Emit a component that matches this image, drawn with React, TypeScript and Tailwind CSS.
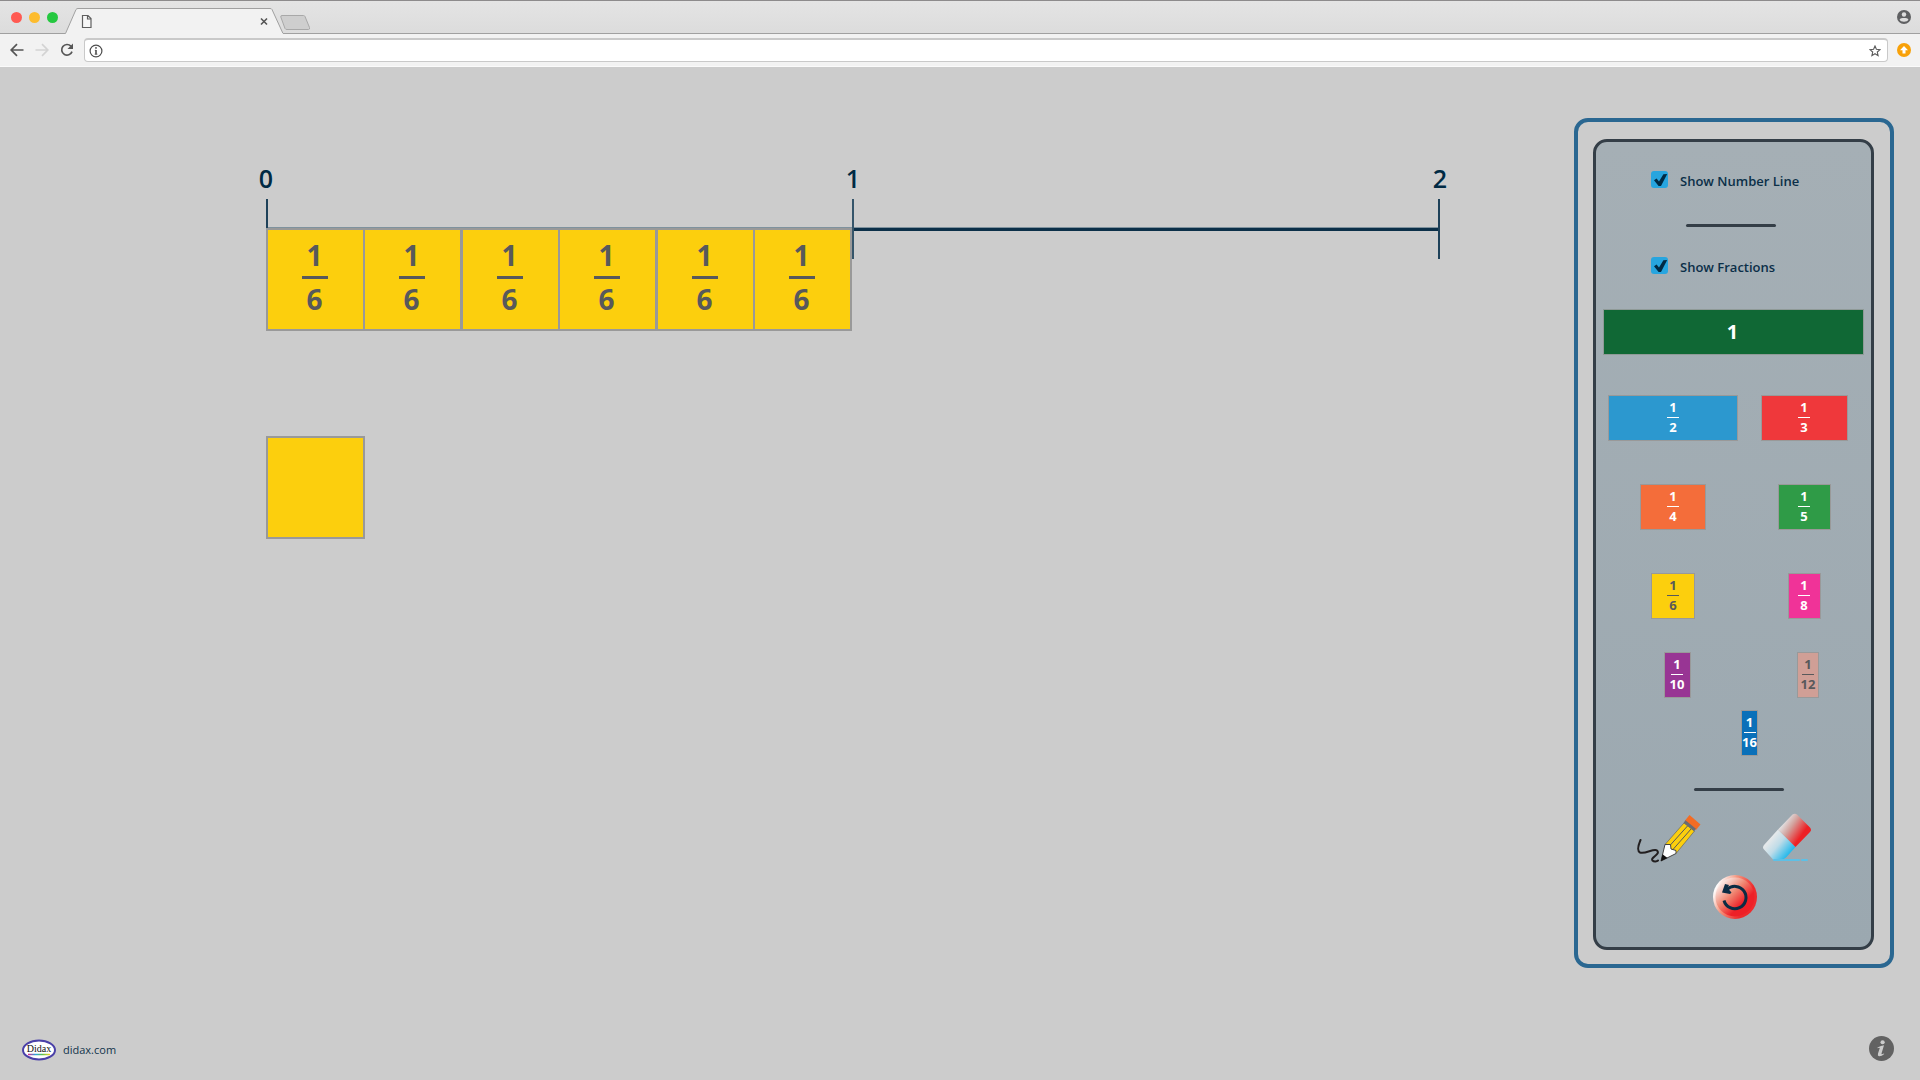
import React, { useState } from "react";

type MiniTile = {
  denominator: number;
  size: string;
  color: string;
};

const tileRows: { className: string; tiles: MiniTile[] }[] = [
  {
    className: "mt-10",
    tiles: [
      { denominator: 2, size: "w-[130px]", color: "bg-[#2c98cf] text-white" },
      { denominator: 3, size: "w-[87px]", color: "bg-[#ef383b] text-white" },
    ],
  },
  {
    className: "mt-[43px]",
    tiles: [
      { denominator: 4, size: "w-[66px]", color: "bg-[#f46d3a] text-white" },
      { denominator: 5, size: "w-[53px]", color: "bg-[#2f9b47] text-white" },
    ],
  },
  {
    className: "mt-[43px]",
    tiles: [
      { denominator: 6, size: "w-11", color: "bg-[#fccf0d] text-[#58595b]" },
      { denominator: 8, size: "w-[33px]", color: "bg-[#f03398] text-white" },
    ],
  },
  {
    className: "mt-[33px] pl-1",
    tiles: [
      { denominator: 10, size: "w-[27px]", color: "bg-[#983594] text-white" },
      { denominator: 12, size: "w-[22px]", color: "bg-[#d09f96] text-[#58595b]" },
    ],
  },
];

function PaletteTile({ denominator, size, color }: MiniTile) {
  return (
    <button
      type="button"
      aria-label={`Add 1/${denominator} tile`}
      className={`flex h-[46px] flex-col items-center border border-[#999] pt-[3px] text-[13px] leading-4 font-bold ${size} ${color}`}
    >
      <span>1</span>
      <span className="mt-0.5 h-px w-3 shrink-0 bg-current" />
      <span className="mt-px">{denominator}</span>
    </button>
  );
}

function SixthTile({ showLabel, className = "" }: { showLabel: boolean; className?: string }) {
  return (
    <div
      className={`flex h-[103px] w-[99px] shrink-0 flex-col items-center border-2 border-[#999] bg-[#fccf0d] pt-[11px] pr-0.5 text-[28px] leading-7 font-bold text-[#58595b] ${className}`}
    >
      {showLabel && (
        <>
          <span>1</span>
          <span className="mt-[7px] h-[3px] w-[26px] bg-current" />
          <span className="mt-1.5">6</span>
        </>
      )}
    </div>
  );
}

function CheckOption({
  id,
  label,
  checked,
  onChange,
}: {
  id: string;
  label: string;
  checked: boolean;
  onChange: (value: boolean) => void;
}) {
  return (
    <div className="flex h-[18px] items-start pl-[55px]">
      <span className="grid size-[17px] shrink-0">
        <input
          id={id}
          type="checkbox"
          checked={checked}
          onChange={(event) => onChange(event.target.checked)}
          className="col-start-1 row-start-1 size-[17px] appearance-none rounded-[3px] bg-[#27a5df]"
        />
        {checked && (
          <svg viewBox="0 0 17 17" className="pointer-events-none col-start-1 row-start-1 size-[17px]" aria-hidden="true">
            <path d="M3 9.2 5.6 7.6 8 10.4 12.4 3.2 16.2 3 10 15H7.6Z" fill="#002a44" />
          </svg>
        )}
      </span>
      <label htmlFor={id} className="mt-px pl-3 text-[13px] leading-[18px] font-semibold whitespace-nowrap text-[#0b2f48]">
        {label}
      </label>
    </div>
  );
}

function BrowserBar() {
  return (
    <header className="border-t border-[#8d8b8c] bg-[#f2f2f2]">
      <div className="flex h-[33px] items-stretch bg-gradient-to-b from-[#e4e4e4] to-[#dcdcdc]">
        <div className="flex w-16 shrink-0 items-center gap-[7px] border-b border-[#a0a0a0] pl-[11px]">
          <span className="size-[11px] rounded-full bg-[#ff5a52]" />
          <span className="size-[11px] rounded-full bg-[#fdbc2e]" />
          <span className="size-[11px] rounded-full bg-[#25c840]" />
        </div>
        <svg width="250" height="33" viewBox="0 0 250 33" className="shrink-0" aria-hidden="true">
          <path d="M0 33V32.5H1.5L12 8.5Q12.600 7.500 14 7.500H206Q207.500 7.500 208 8.500L219 32.500H250V33Z" fill="#f2f2f2" />
          <path d="M0 32.500H1.500L12 8.500Q12.600 7.500 14 7.500H206Q207.500 7.500 208 8.500L219 32.500H250" fill="none" stroke="#a0a0a0" />
          <path d="M2 32.500H218.500" stroke="#f2f2f2" strokeWidth="1.200" />
          <path d="M18.500 14.500H24L27 17.500V26.500H18.500Z M23.500 14.500V18H27" fill="#f7f7f7" stroke="#5f5f5f" strokeWidth="1.200" />
          <path d="M197 17.500 203 23.500M203 17.500 197 23.500" stroke="#555" strokeWidth="1.600" />
          <path d="M218 14.500H239.500Q240.500 14.500 241 15.500L245.500 26.500Q246 28.500 244.500 28.500H223Q221.500 28.500 221 27.500L216.800 16Q216.500 14.500 218 14.500Z" fill="#cecece" stroke="#a8a8a8" />
        </svg>
        <div className="flex grow items-center justify-end border-b border-[#a0a0a0] pr-[9px]">
          <button type="button" aria-label="Profile">
            <svg width="14" height="14" viewBox="0 0 14 14">
              <circle cx="7" cy="7" r="7" fill="#5f6062" />
              <circle cx="7" cy="4.500" r="2.200" fill="#dedede" />
              <path d="M2.600 9.500C3.500 7.600 10.500 7.600 11.400 9.500 10.500 12.500 3.500 12.500 2.600 9.500Z" fill="#dedede" />
            </svg>
          </button>
        </div>
      </div>
      <div className="flex h-[33px] items-center border-b border-[#fafafa] pr-[9px]">
        <div className="flex w-[84px] shrink-0 items-center gap-[11px] pl-2.5">
          <button type="button" aria-label="Back">
            <svg width="14" height="14" viewBox="0 0 14 14" fill="none" stroke="#555" strokeWidth="1.700">
              <path d="M13.500 7H1.500M7 1.200 1.200 7 7 12.800" />
            </svg>
          </button>
          <button type="button" aria-label="Forward">
            <svg width="14" height="14" viewBox="0 0 14 14" fill="none" stroke="#d3d3d3" strokeWidth="1.700">
              <path d="M.5 7H12.500M7 1.200 12.800 7 7 12.800" />
            </svg>
          </button>
          <button type="button" aria-label="Reload">
            <svg width="14" height="14" viewBox="0 0 14 14">
              <path d="M12 8.600A5.300 5.300 0 1 1 10.900 3.200" fill="none" stroke="#555" strokeWidth="1.700" />
              <path d="M13 .5V6H7.500Z" fill="#555" />
            </svg>
          </button>
        </div>
        <div className="flex h-6 grow items-center rounded-sm border border-t-2 border-[#c9c9c9] bg-white pr-1.5 pl-1">
          <svg width="14" height="14" viewBox="0 0 14 14" className="shrink-0" aria-hidden="true">
            <circle cx="7" cy="7" r="5.900" fill="none" stroke="#4d4d4d" strokeWidth="1.200" />
            <path d="M7 6V10.500" fill="none" stroke="#4d4d4d" strokeWidth="1.600" />
            <path d="M5.800 6.300H7M5.600 10.200H8.500" stroke="#4d4d4d" strokeWidth=".7" />
            <circle cx="7" cy="3.900" r=".9" fill="#4d4d4d" />
          </svg>
          <input type="text" aria-label="Address" className="h-5 min-w-0 grow bg-transparent px-2 text-sm outline-none" />
          <button type="button" aria-label="Bookmark">
            <svg width="12" height="12" viewBox="0 0 12 12">
              <path d="M6 1 7.400 4.300 11 4.600 8.300 7 9.100 10.600 6 8.700 2.900 10.600 3.700 7 1 4.600 4.600 4.300Z" fill="none" stroke="#5a5a5a" strokeWidth="1.100" />
            </svg>
          </button>
        </div>
        <button type="button" aria-label="Update" className="ml-[9px]">
          <svg width="14" height="14" viewBox="0 0 14 14">
            <circle cx="7" cy="7" r="7" fill="#f8a109" />
            <path d="M7 3 11 7.200H8.500V10.500H5.500V7.200H3Z" fill="#fff" />
          </svg>
        </button>
      </div>
    </header>
  );
}

function PencilIcon() {
  return (
    <svg width="66" height="50" viewBox="0 0 66 50" aria-hidden="true">
      <path d="M4.500 26C2 32 .8 37 4 38.500C9 40.500 18 34 21 36.500C25 40.500 14 43.500 16.500 46.500C18 48 21 47.500 22 46.500" fill="none" stroke="#221f20" strokeWidth="2" strokeLinecap="round" />
      <path d="M29 30.500 48 9 58.500 17 40 39.500Z" fill="#fccf0d" stroke="#58595b" strokeWidth=".6" />
      <path d="M33 32.500 51.500 12M36.500 36 55.500 14.500" stroke="#58595b" strokeWidth="1" />
      <path d="M29 30.500 34.500 30.500 35 35 40 36.500 40 39.500 25 47Z" fill="#fff" stroke="#444" strokeWidth="1" />
      <path d="M26.500 40.200 31.500 44 24.800 47.300Z" fill="#111" />
      <path d="M53.500 1 64.500 10.500 60 16 48.800 6.800Z" fill="#f36c24" />
      <path d="M48.500 7.500 59 16" stroke="#6a6c70" strokeWidth="3" />
    </svg>
  );
}

function EraserIcon() {
  return (
    <svg width="50" height="49" viewBox="0 0 50 49" aria-hidden="true">
      <defs>
        <linearGradient id="eraserRed" x1="22" y1="9" x2="42" y2="23" gradientUnits="userSpaceOnUse">
          <stop stopColor="#e1e1e2" />
          <stop offset=".35" stopColor="#d3a29d" />
          <stop offset=".9" stopColor="#ed2024" />
        </linearGradient>
        <linearGradient id="eraserBlue" x1="9" y1="26" x2="27" y2="41" gradientUnits="userSpaceOnUse">
          <stop stopColor="#e4e8ea" />
          <stop offset=".4" stopColor="#bfdce8" />
          <stop offset="1" stopColor="#24b9ec" />
        </linearGradient>
      </defs>
      <path d="M16 16.500 33.500 34 24 44.500Q21 47 18 47H11.500L2 36.500Q0 34.500 2 32Z" fill="url(#eraserBlue)" />
      <path d="M16 16.500 30.500 1.500Q33 0 35 1.500L48 14.500Q50 17 48 19L33.500 34Z" fill="url(#eraserRed)" />
      <path d="M12 47H37M40 47H45" stroke="#5dc0e6" strokeWidth="2" strokeLinecap="round" />
    </svg>
  );
}

function ResetIcon() {
  return (
    <svg width="44" height="44" viewBox="0 0 44 44" aria-hidden="true">
      <defs>
        <linearGradient id="resetFace" x1="8" y1="7" x2="36" y2="36" gradientUnits="userSpaceOnUse">
          <stop stopColor="#fbefec" />
          <stop offset=".4" stopColor="#f08873" />
          <stop offset=".75" stopColor="#ee2027" />
        </linearGradient>
        <linearGradient id="resetRim" x1="2" y1="14" x2="40" y2="32" gradientUnits="userSpaceOnUse">
          <stop stopColor="#fff" />
          <stop offset=".35" stopColor="#f4937c" />
          <stop offset=".8" stopColor="#ee2a2c" />
        </linearGradient>
      </defs>
      <circle cx="22" cy="22" r="22" fill="url(#resetRim)" />
      <circle cx="22" cy="22" r="19.500" fill="url(#resetFace)" />
      <path d="M11 25.500A11.200 11.200 0 1 0 14 14.500" fill="none" stroke="#0b2c44" strokeWidth="3" />
      <path d="M12 9 16 10 14.500 13 18.500 17.500 17 19 9 17.500Z" fill="#0b2c44" />
    </svg>
  );
}

const sixthOverlaps = ["", "-ml-0.5", "-ml-px", "-ml-0.5", "-ml-px", "-ml-0.5"];

export default function App() {
  const [showLine, setShowLine] = useState(true);
  const [showFractions, setShowFractions] = useState(true);

  return (
    <div className="flex min-h-screen flex-col bg-[#ccc] font-['Open_Sans','Noto_Sans',sans-serif]">
      <BrowserBar />

      <main className="flex items-start justify-between pt-[51px] pr-[26px] pl-[266px]">
        <section aria-label="Workspace" className="w-[1174px] pt-[49px] text-[#002a44]">
          <div className={showLine ? "" : "invisible"}>
            <div className="-mx-3 flex h-8 justify-between text-[25px] leading-[22px] font-semibold">
              <span className="w-6 text-center">0</span>
              <span className="w-6 text-center">1</span>
              <span className="w-6 text-center">2</span>
            </div>
            <div className="flex h-[60px] items-center">
              <span className="h-full w-0.5 bg-[#1e4159]" />
              <span className="h-1 grow border-t border-[#7f929d] bg-[#0b2f48]" />
              <span className="h-full w-0.5 bg-[#35556a]" />
              <span className="h-1 grow border-t border-[#7f929d] bg-[#0b2f48]" />
              <span className="h-full w-0.5 bg-[#1e4159]" />
            </div>
          </div>
          <div className="relative -mt-[31px] flex">
            {sixthOverlaps.map((overlap, index) => (
              <SixthTile key={index} showLabel={showFractions} className={overlap} />
            ))}
          </div>
          <div className="mt-[105px]">
            <SixthTile showLabel={false} />
          </div>
        </section>

        <aside className="w-80 shrink-0 rounded-[14px] border-4 border-[#2a6791] pt-[17px] pr-4 pb-3.5 pl-[15px]">
          <div className="rounded-[14px] border-[3px] border-[#343e47] bg-gradient-to-b from-[#a5afb5] to-[#9ba8b0] pt-[29px] pb-7">
            <CheckOption id="show-line" label="Show Number Line" checked={showLine} onChange={setShowLine} />
            <hr className="mt-[35px] ml-[90px] h-[3px] w-[90px] rounded-full border-0 bg-[#343e47]" />
            <div className="mt-[30px]">
              <CheckOption id="show-fractions" label="Show Fractions" checked={showFractions} onChange={setShowFractions} />
            </div>
            <button
              type="button"
              className="mx-[7px] mt-[34px] flex h-[46px] w-[261px] items-center justify-center border border-[#8f9a97] bg-[#106835] pr-0.5 text-xl font-bold text-white"
            >
              1
            </button>
            {tileRows.map((row) => (
              <div key={row.tiles[0].denominator} className={row.className}>
                <div className="ml-3 grid grid-cols-[130px_130px] justify-items-center gap-x-px">
                  {row.tiles.map((tile) => (
                    <PaletteTile key={tile.denominator} {...tile} />
                  ))}
                </div>
              </div>
            ))}
            <div className="mt-3 ml-[145px] flex">
              <PaletteTile denominator={16} size="w-[17px]" color="bg-[#0a70b9] text-white" />
            </div>
            <hr className="mt-8 ml-[98px] h-[3px] w-[90px] rounded-full border-0 bg-[#343e47]" />
            <div className="mt-[22px] ml-10 flex items-start gap-[60px]">
              <button type="button" aria-label="Draw" className="pt-px">
                <PencilIcon />
              </button>
              <button type="button" aria-label="Erase">
                <EraserIcon />
              </button>
            </div>
            <button type="button" aria-label="Reset" className="mt-[11px] ml-[117px] block">
              <ResetIcon />
            </button>
          </div>
        </aside>
      </main>

      <footer className="mt-auto flex items-center justify-between pr-[26px] pb-[19px] pl-[22px]">
        <a href="#didax" className="flex items-center gap-[7px] pt-1 text-[11px] font-medium text-[#12344b]">
          <svg width="34" height="22" viewBox="0 0 34 22" aria-hidden="true">
            <defs>
              <linearGradient id="rainbow" x1="6" y1="0" x2="28" y2="0" gradientUnits="userSpaceOnUse">
                <stop stopColor="#e0218a" />
                <stop offset=".35" stopColor="#2aa5dd" />
                <stop offset=".65" stopColor="#5cc04d" />
                <stop offset="1" stopColor="#f4d321" />
              </linearGradient>
            </defs>
            <ellipse cx="17" cy="11" rx="16" ry="9.500" fill="#fff" stroke="#4a40a8" strokeWidth="2" />
            <text x="17" y="13" textAnchor="middle" className="font-['Liberation_Serif',serif] text-[10px] font-normal" fill="#111">
              Didax
            </text>
            <path d="M6 15.500H28" stroke="url(#rainbow)" strokeWidth="1.500" />
          </svg>
          <span className="pt-px">didax.com</span>
        </a>
        <button type="button" aria-label="Information">
          <svg width="25" height="25" viewBox="0 0 25 25">
            <circle cx="12.500" cy="12.500" r="12.500" fill="#626262" />
            <ellipse cx="13.600" cy="6.300" rx="2.100" ry="2" fill="#ccc" />
            <path d="M8.500 11.500Q12 9.500 15 9.300L12.500 17.500Q12.300 18.800 14.800 17.400L15.300 18Q12.500 20.500 10 20.300 8.300 20 9 17.500L10.800 12Q10 11.600 8.500 12.200Z" fill="#ccc" />
          </svg>
        </button>
      </footer>
    </div>
  );
}
